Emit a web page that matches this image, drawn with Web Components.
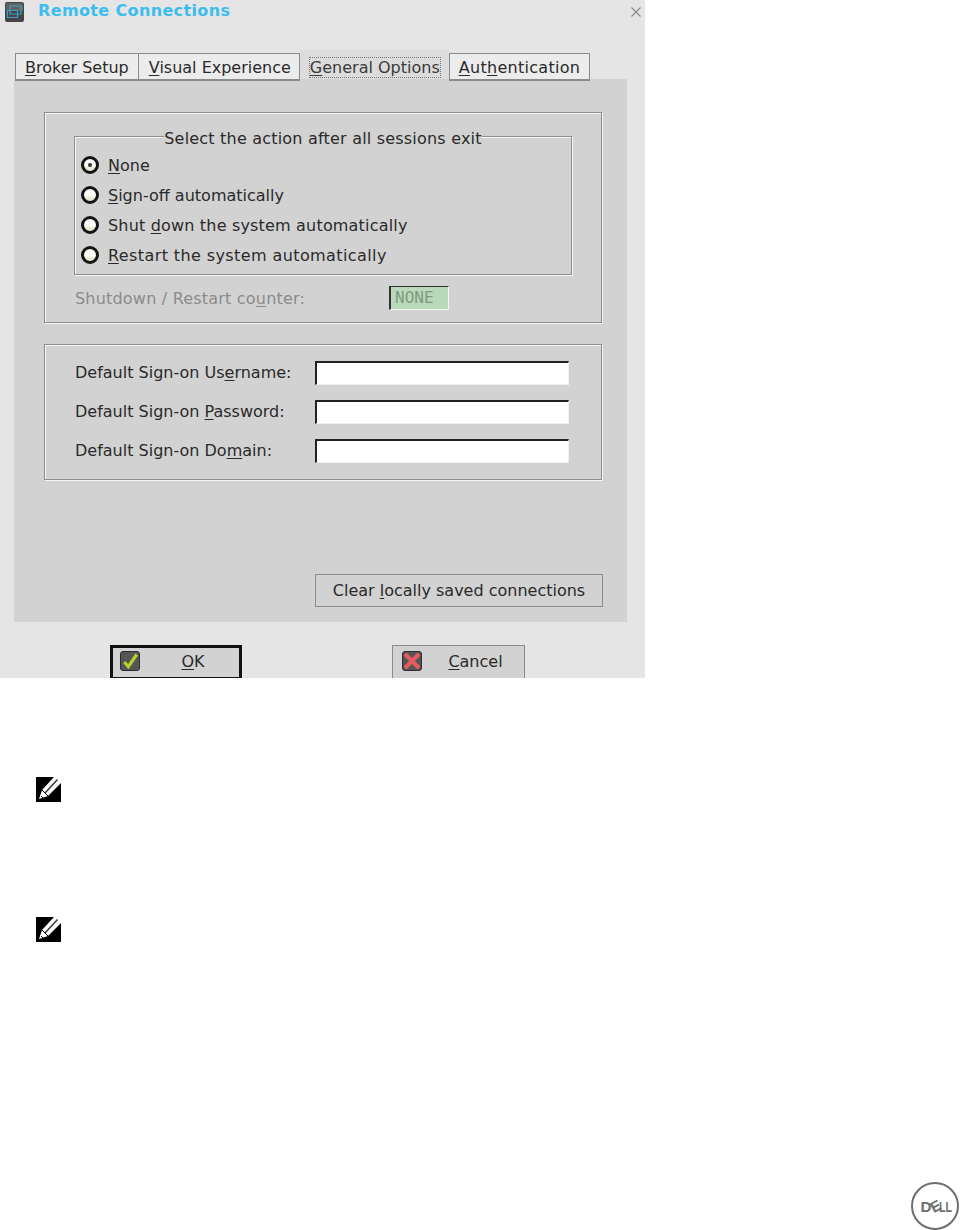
<!doctype html>
<html lang="en">
<head>
<meta charset="utf-8">
<title>Remote Connections</title>
<style>
  html, body { margin: 0; background: #fff; }
  body { width: 961px; height: 1230px; overflow: hidden; font-family: "DejaVu Sans", sans-serif; font-size: 16px; color: #2a2a2a; }
  u { text-underline-offset: 2px; text-decoration-thickness: 1px; }
</style>
</head>
<body>
<doc-page>
  <dialog-window title="Remote Connections">
    <tab-bar>
      <tab-item><u>B</u>roker Setup</tab-item>
      <tab-item style="padding:0 8px 0 10px"><u>V</u>isual Experience</tab-item>
      <tab-item active style="margin-left:1px;padding:8px 9px 0 10px"><u>G</u>eneral Options</tab-item>
      <tab-item style="letter-spacing:.28px"><u>A</u>ut<u>h</u>entication</tab-item>
    </tab-bar>
    <tab-panel>
      <etched-box style="height:211px">
        <etched-box legend="Select the action after all sessions exit" style="margin:23px 29px 0;height:139px;padding:13px 6px 0">
          <radio-row checked><u>N</u>one</radio-row>
          <radio-row><u>S</u>ign-off automatically</radio-row>
          <radio-row style="letter-spacing:.18px">Shut <u>d</u>own the system automatically</radio-row>
          <radio-row style="letter-spacing:.4px"><u>R</u>estart the system automatically</radio-row>
        </etched-box>
        <counter-row value="NONE" style="letter-spacing:.2px">Shutdown / Restart co<u>u</u>nter:</counter-row>
      </etched-box>
      <etched-box style="height:136px;margin-top:21px;padding-top:16px">
        <field-row>Default Sign-on Us<u>e</u>rname:</field-row>
        <field-row>Default Sign-on <u>P</u>assword:</field-row>
        <field-row>Default Sign-on Do<u>m</u>ain:</field-row>
      </etched-box>
      <div style="display:flex;justify-content:flex-end;margin:94px -1px 0 0">
        <push-button style="width:288px;height:33px;padding-bottom:0">Clear <u>l</u>ocally saved connections</push-button>
      </div>
    </tab-panel>
    <button-row>
      <push-button default icon="ok" style="width:132px;height:35px"><u>O</u>K</push-button>
      <push-button icon="cancel" style="width:133px;height:35px"><u>C</u>ancel</push-button>
    </button-row>
  </dialog-window>
  <note-icon style="margin-top:99px"></note-icon>
  <note-icon style="margin-top:115px"></note-icon>
  <dell-logo></dell-logo>
</doc-page>

<script>
// tiny helper, every element just gets its html in an open shadow root
function shadow(el, html) {
  el.attachShadow({ mode: "open" }).innerHTML = html;
}

class DocPage extends HTMLElement {
  connectedCallback() {
    shadow(this, `<style>
      :host { display: flex; flex-direction: column; height: 1230px; }
    </style><slot></slot>`);
  }
}

class DialogWindow extends HTMLElement {
  connectedCallback() {
    const title = this.getAttribute("title") ?? "";
    shadow(this, `<style>
      :host { display: block; width: 645px; height: 678px; background: #e5e5e5; overflow: hidden; }
      header { display: flex; align-items: flex-start; height: 50px; padding: 2px 4px 0 5px; box-sizing: border-box; }
      svg.app { flex: none; }
      h1 { margin: 0 0 0 14px; font: bold 16px/18px "DejaVu Sans", sans-serif; color: #3dbdee; letter-spacing: 0.36px; flex: 1; }
      svg.x { margin-top: 5px; }
    </style>
    <header>
      <svg class="app" width="19" height="20" viewBox="0 0 19 20">
        <rect width="19" height="20" rx="2" fill="#454545"/>
        <rect x="1" y="1" width="17" height="8" rx="1" fill="#626262"/>
        <path d="M5 4h11v8H5zM2.500 8.500h10v7h-10z" fill="none" stroke="#3c9fca" stroke-width="1.200"/>
      </svg>
      <h1>${title}</h1>
      <svg class="x" width="10" height="10" viewBox="0 0 10 10"><path d="M.5.500l9 9M9.500.500l-9 9" stroke="#8a8a8a" stroke-width="1.200"/></svg>
    </header>
    <slot></slot>`);
  }
}

class TabBar extends HTMLElement {
  connectedCallback() {
    shadow(this, `<style>
      :host { display: flex; align-items: flex-start; padding-left: 15px; height: 29px; position: relative; z-index: 1; }
    </style><slot></slot>`);
  }
}

class TabItem extends HTMLElement {
  connectedCallback() {
    const active = this.hasAttribute("active");
    shadow(this, `<style>
      :host { display: block; box-sizing: border-box; margin-top: 3px; height: 28px; padding: 0 9px; line-height: 27px;
        border: 1px solid #8b8b8b; border-width: 1px 1px 2px 1px; background: #ececec; color: #2a2a2a; white-space: nowrap; margin-right: -1px; }
      :host([active]) { margin-top: 0; height: 29px; border: 0; background: #dcdcdc; padding: 8px 10px 0; line-height: 19px; color: #3a3a3a; margin-right: 0; }
      span { display: block; }
      :host([active]) span { outline: 1px dotted #777; outline-offset: 0; height: 19px; }
    </style><span><slot></slot></span>`);
    if (active) this.setAttribute("aria-selected", "true");
  }
}

class TabPanel extends HTMLElement {
  connectedCallback() {
    shadow(this, `<style>
      :host { display: block; margin-left: 14px; width: 613px; height: 543px; box-sizing: border-box; padding: 33px 25px 0 30px; background: #d2d2d2; }
    </style><slot></slot>`);
  }
}

class EtchedBox extends HTMLElement {
  connectedCallback() {
    const legend = this.getAttribute("legend");
    shadow(this, `<style>
      :host { display: block; position: relative; box-sizing: border-box; border: 1px solid #8e8e8e; box-shadow: inset 1px 1px 0 #f6f6f6, 1px 1px 0 #f6f6f6; }
      .legend { position: absolute; top: -7px; left: 0; right: 0; text-align: center; line-height: 18px; letter-spacing: .2px; }
      .legend span { background: #d2d2d2; }
    </style>
    ${legend ? `<div class="legend"><span>${legend}</span></div>` : ""}
    <slot></slot>`);
  }
}

class RadioRow extends HTMLElement {
  connectedCallback() {
    const checked = this.hasAttribute("checked");
    shadow(this, `<style>
      :host { display: flex; align-items: center; height: 30px; gap: 9px; }
      i { display: block; box-sizing: border-box; width: 18px; height: 18px; border-radius: 50%; border: 3px solid #141414;
        background: linear-gradient(#fbfbf7 60%, #ece9d4 70%); position: relative; }
      i.on::after { content: ""; position: absolute; left: 4px; top: 4px; width: 4px; height: 4px; border-radius: 50%; background: #333; }
    </style><i class="${checked ? "on" : ""}"></i><span><slot></slot></span>`);
  }
}

class CounterRow extends HTMLElement {
  connectedCallback() {
    shadow(this, `<style>
      :host { display: flex; align-items: center; margin: 11px 0 0 30px; height: 24px; color: #8b8b8b; }
      span { width: 314px; flex: none; padding-top: 1px; }
      b { box-sizing: border-box; display: block; width: 60px; height: 24px; padding-left: 4px; font: 16px/22px "DejaVu Sans Mono", monospace; letter-spacing: 0;
        color: #7f9a82; background: #b9d9b9; border: 1px solid #f4f4f4; border-top: 1px solid #333; border-left: 2px solid #333; }
    </style><span><slot></slot></span><b>${this.getAttribute("value")}</b>`);
  }
}

class FieldRow extends HTMLElement {
  connectedCallback() {
    shadow(this, `<style>
      :host { display: flex; align-items: center; margin: 0 0 15px 30px; height: 24px; }
      span { width: 240px; flex: none; padding-bottom: 2px; }
      input { box-sizing: border-box; width: 254px; height: 24px; margin: 0; padding: 0; background: #fff; outline: 0;
        border: 1px solid #f0f0f0; border-top: 2px solid #222; border-left: 2px solid #222; }
    </style><span><slot></slot></span><input type="text">`);
  }
}

class ButtonRow extends HTMLElement {
  connectedCallback() {
    shadow(this, `<style>
      :host { display: flex; gap: 150px; padding: 23px 0 0 110px; }
    </style><slot></slot>`);
  }
}

const BTN_ICONS = {
  ok: `<svg width="20" height="20" viewBox="0 0 20 20"><rect x=".5" y=".5" width="19" height="19" rx="2.500" fill="#555" stroke="#2c2c2c"/><path d="M4.300 11l4 4.700 8.400-12.200" fill="none" stroke="#b6d32c" stroke-width="3.200"/></svg>`,
  cancel: `<svg width="20" height="20" viewBox="0 0 20 20"><rect x=".5" y=".5" width="19" height="19" rx="2.500" fill="#555" stroke="#2c2c2c"/><path d="M3 3l14 14M17 3L3 17" fill="none" stroke="#e85a5f" stroke-width="4"/></svg>`
};

class PushButton extends HTMLElement {
  connectedCallback() {
    const icon = this.getAttribute("icon");
    shadow(this, `<style>
      :host { display: flex; box-sizing: border-box; align-items: center; justify-content: center; position: relative; flex: none;
        background: #d2d2d2; border: 1px solid #8b8b8b; white-space: nowrap; padding-bottom: 2px; }
      :host([default]) { border: 3px solid #111; }
      svg { position: absolute; left: 9px; top: 5px; }
      :host([default]) svg { left: 7px; top: 3px; }
      div { padding-left: ${icon ? 34 : 0}px; }
    </style>${icon ? BTN_ICONS[icon] : ""}<div><slot></slot></div>`);
  }
}

class NoteIcon extends HTMLElement {
  connectedCallback() {
    shadow(this, `<style>
      :host { display: block; margin-left: 36px; width: 25px; height: 25px; flex: none; }
    </style>
    <svg width="25" height="25" viewBox="0 0 25 25">
      <rect width="25" height="25" fill="#000"/>
      <path d="M3 22l3-9L18 0h7v6L12 19z" fill="#fff"/>
      <path d="M9 16L21.500 2.500" stroke="#3a3a3a" stroke-width="1.500"/>
      <path d="M6 13l6 6" stroke="#000" stroke-width="1"/>
      <path d="M5 19l2 2" stroke="#000" stroke-width="1"/>
    </svg>`);
  }
}

class DellLogo extends HTMLElement {
  connectedCallback() {
    shadow(this, `<style>
      :host { display: block; position: absolute; left: 911px; top: 1181px; width: 50px; height: 49px; overflow: hidden; }
      svg { display: block; }
      text { font: bold 15px "Liberation Sans", sans-serif; fill: #6e6e6e; }
    </style>
    <svg width="50" height="49" viewBox="0 0 50 49">
      <circle cx="24" cy="25" r="23" fill="#fff" stroke="#6e6e6e" stroke-width="2"/>
      <text x="9.500" y="30.500" textLength="11" lengthAdjust="spacingAndGlyphs">D</text>
      <text transform="translate(24.500 25) rotate(-28)" text-anchor="middle" y="5.500">E</text>
      <text x="28" y="30.500" textLength="13" lengthAdjust="spacingAndGlyphs">LL</text>
    </svg>`);
  }
}

customElements.define("doc-page", DocPage);
customElements.define("dialog-window", DialogWindow);
customElements.define("tab-bar", TabBar);
customElements.define("tab-item", TabItem);
customElements.define("tab-panel", TabPanel);
customElements.define("etched-box", EtchedBox);
customElements.define("radio-row", RadioRow);
customElements.define("counter-row", CounterRow);
customElements.define("field-row", FieldRow);
customElements.define("button-row", ButtonRow);
customElements.define("push-button", PushButton);
customElements.define("note-icon", NoteIcon);
customElements.define("dell-logo", DellLogo);
</script>
</body>
</html>
